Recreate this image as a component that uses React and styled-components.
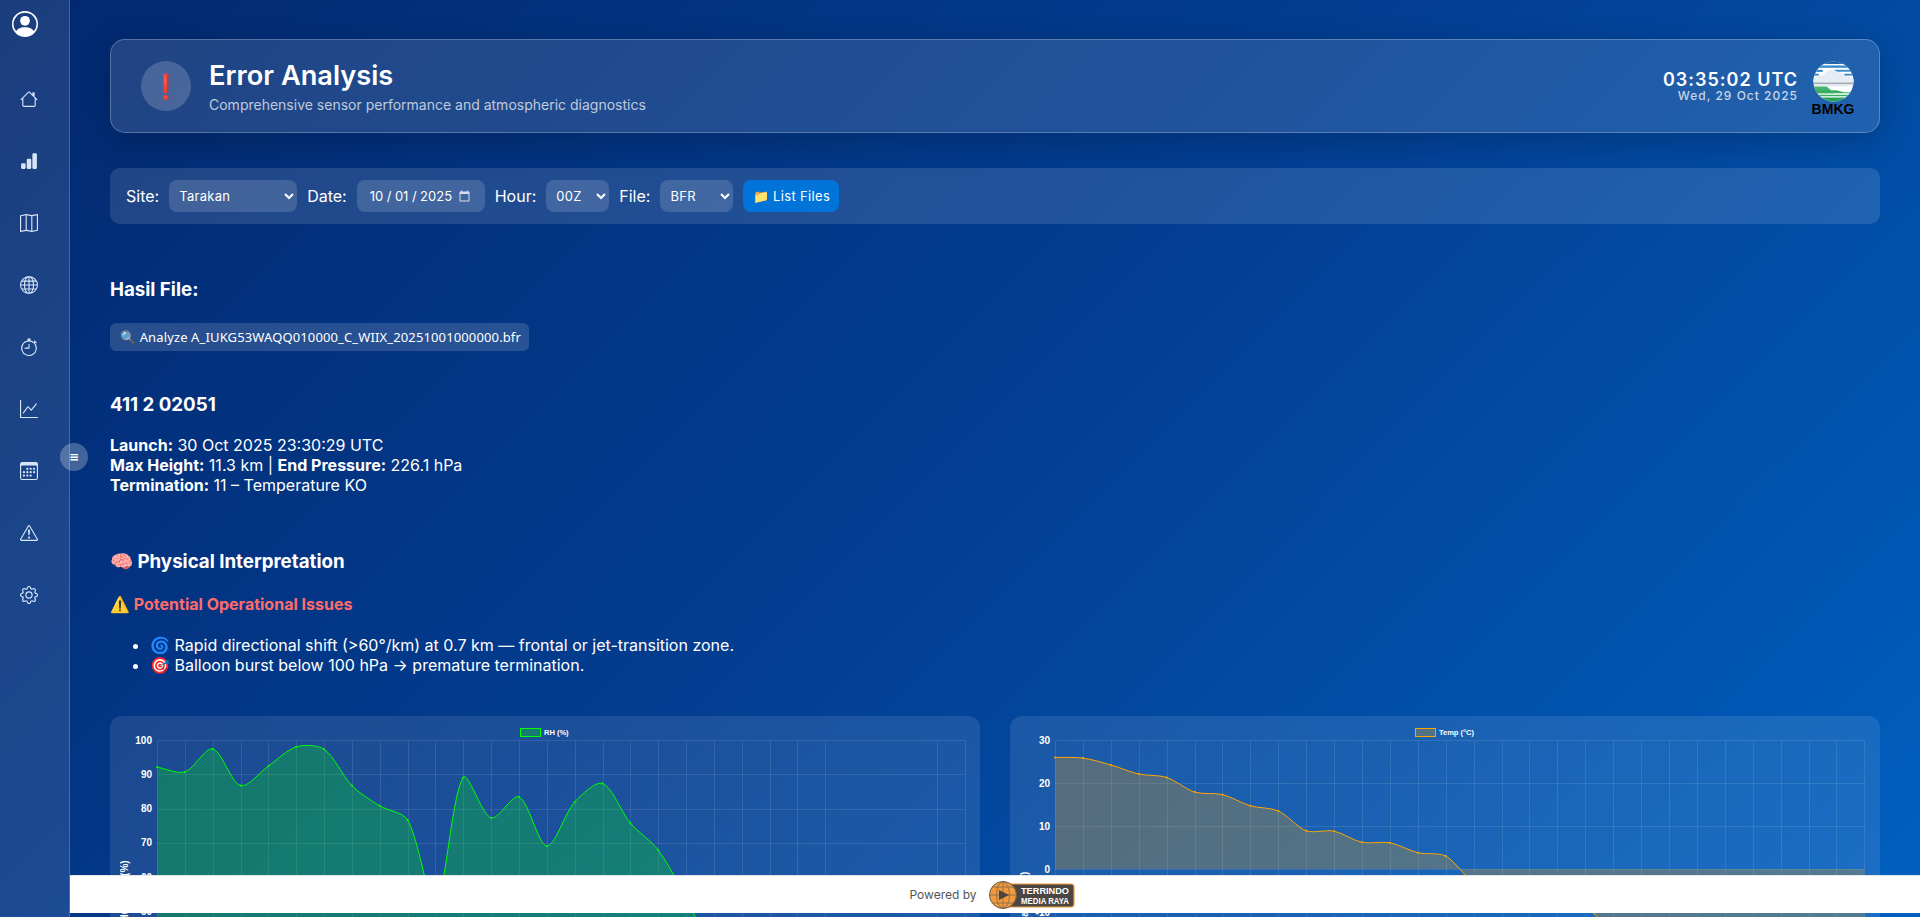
import React from "react";
import styled, { createGlobalStyle } from "styled-components";
import {
  BsPersonCircle, BsHouse, BsBarChartFill, BsMap, BsGlobe, BsStopwatch,
  BsGraphUp, BsCalendar3, BsExclamationTriangle, BsGear,
} from "react-icons/bs";

const Global = createGlobalStyle`
  html, body { margin: 0; height: 100%; overflow: hidden; }
  body { font-family: Inter, "Noto Sans", sans-serif; color: #fff; }
  * { box-sizing: border-box; }
`;

const Shell = styled.div`
  height: 100vh;
  display: flex;
  background: linear-gradient(135deg, #02286f 0%, #033e92 50%, #0060c0 100%);
  overflow: hidden;
`;

const Sidebar = styled.aside`
  position: relative;
  flex: 0 0 70px;
  display: flex;
  flex-direction: column;
  background: rgba(255, 255, 255, 0.1);
  border-right: 1px solid rgba(255, 255, 255, 0.2);
  padding: 11px 0 0 0;
`;

const Avatar = styled.div`
  width: 50px;
  height: 26px;
  display: flex;
  justify-content: center;
  font-size: 26px;
  color: #fff;
`;

const Nav = styled.nav`
  margin-top: 53px;
  display: flex;
  flex-direction: column;
  gap: 44px;
  padding-left: 20px;
`;

const NavIcon = styled.a`
  width: 18px;
  height: 18px;
  display: block;
  font-size: 18px;
  line-height: 18px;
  color: rgba(225, 238, 255, 0.95);
`;

const Toggle = styled.button`
  position: absolute;
  top: 443px;
  left: 60px;
  width: 28px;
  height: 28px;
  padding: 0;
  border: 0;
  border-radius: 50%;
  background: rgba(255, 255, 255, 0.25);
  color: #fff;
  font: 700 12px/28px "DejaVu Sans", sans-serif;
  text-align: center;
`;

const Main = styled.main`
  flex: 1;
  min-width: 0;
  padding: 39px 40px 0;
`;

const Header = styled.header`
  height: 94px;
  display: flex;
  align-items: center;
  justify-content: space-between;
  padding: 0 25px 0 30px;
  background: rgba(255, 255, 255, 0.12);
  border: 1px solid rgba(255, 255, 255, 0.25);
  border-radius: 15px;
  box-shadow: 0 8px 32px rgba(0, 0, 0, 0.2);
`;

const HeaderLeft = styled.div`
  display: flex;
  align-items: center;
  gap: 18px;
`;

const IconCircle = styled.div`
  width: 50px;
  height: 50px;
  border-radius: 50%;
  background: rgba(255, 255, 255, 0.18);
  display: flex;
  align-items: center;
  justify-content: center;
  font-size: 24px;
`;

const Title = styled.h1`
  margin: 0;
  font-size: 27.2px;
  line-height: 34px;
  font-weight: 600;
`;

const Subtitle = styled.p`
  margin: 3px 0 0;
  font-size: 14px;
  line-height: 17px;
  color: rgba(255, 255, 255, 0.72);
`;

const HeaderRight = styled.div`
  display: flex;
  align-items: center;
  gap: 14px;
`;

const Clock = styled.div`
  text-align: right;
  margin-top: 1px;
`;

const ClockTime = styled.div`
  font-size: 18px;
  line-height: 19px;
  font-weight: 600;
  letter-spacing: 1px;
`;

const ClockDate = styled.div`
  font-size: 12px;
  line-height: 14px;
  font-weight: 500;
  letter-spacing: 1px;
  color: rgba(255, 255, 255, 0.75);
`;

const LogoBox = styled.div`
  width: 42px;
  margin-top: 4px;
  display: flex;
  flex-direction: column;
  align-items: center;
`;

const LogoText = styled.span`
  font: 700 14px/14px "Liberation Sans", sans-serif;
  color: #000;
`;

const FilterBar = styled.section`
  margin-top: 35px;
  height: 56px;
  display: flex;
  align-items: center;
  gap: 10px;
  padding: 0 16px;
  background: rgba(255, 255, 255, 0.12);
  border-radius: 10px;
`;

const FieldLabel = styled.label`
  font-size: 16px;
  color: #fff;
`;

const Select = styled.select`
  width: ${(p) => p.$w}px;
  height: 32px;
  padding: 0 6px;
  border: 0;
  border-radius: 8px;
  background: rgba(255, 255, 255, 0.15);
  color: #fff;
  font: 400 13px Inter, sans-serif;
  letter-spacing: 0.3px;
  outline: none;
`;

const DateInput = styled.input`
  width: 128px;
  height: 32px;
  padding: 0 14px 0 12px;
  border: 0;
  border-radius: 8px;
  background: rgba(255, 255, 255, 0.15);
  color: #fff;
  font: 400 13px Inter, sans-serif;
  outline: none;
  &::-webkit-datetime-edit-text {
    padding: 0 2.5px;
  }
  &::-webkit-calendar-picker-indicator {
    filter: invert(1);
    opacity: 0.8;
    margin-left: 0;
    padding: 0;
  }
`;

const ListButton = styled.button`
  height: 32px;
  width: 96px;
  border: 0;
  border-radius: 8px;
  background: #0074d9;
  color: #fff;
  font: 400 13px Inter, sans-serif;
  letter-spacing: 0.35px;
  padding: 0;
`;

const SectionTitle = styled.h3`
  margin: ${(p) => p.$mt}px 0 0;
  font-size: 18.72px;
  line-height: 22px;
  font-weight: 700;
`;

const AnalyzeButton = styled.button`
  display: block;
  margin-top: 22px;
  height: 28px;
  width: 419px;
  padding: 0 10px;
  border: 0;
  border-radius: 6px;
  background: rgba(255, 255, 255, 0.15);
  color: #fff;
  font: 400 13px "Noto Sans", sans-serif;
  letter-spacing: 0.13px;
  text-align: left;
  white-space: nowrap;
`;

const Meta = styled.div`
  margin-top: 19px;
  font-size: 16px;
  line-height: 20px;
  strong { font-weight: 700; }
`;

const IssueTitle = styled.h4`
  margin: 21px 0 0;
  font-size: 16px;
  line-height: 20px;
  font-weight: 700;
  color: #ff6b6b;
`;

const IssueList = styled.ul`
  margin: 21px 0 0;
  padding-left: 40px;
  font-size: 16px;
  line-height: 20px;
`;

const Charts = styled.div`
  margin-top: 41px;
  display: grid;
  grid-template-columns: 1fr 1fr;
  gap: 30px;
`;

const ChartPanel = styled.div`
  background: rgba(255, 255, 255, 0.1);
  border-radius: 12px;
  padding: 0 10px 10px;
`;

const ChartSvg = styled.svg`
  display: block;
  width: 850px;
  height: 420px;
`;

const Footer = styled.footer`
  position: fixed;
  left: 70px;
  right: 0;
  bottom: 4px;
  height: 38px;
  background: #fff;
  border-top: 1px solid #e6e6e6;
  display: flex;
  align-items: center;
  justify-content: center;
  gap: 12px;
  padding-right: 6px;
`;

const FooterText = styled.span`
  font-size: 12px;
  color: #555;
`;

const spline = (pts, t = 0.3) => {
  const c = pts.map((p, i) => {
    const a = pts[i - 1] || p;
    const b = pts[i + 1] || p;
    const d1 = Math.hypot(p[0] - a[0], p[1] - a[1]);
    const d2 = Math.hypot(b[0] - p[0], b[1] - p[1]);
    const s = d1 + d2 || 1;
    const f1 = (t * d1) / s;
    const f2 = (t * d2) / s;
    return {
      p: [p[0] - f1 * (b[0] - a[0]), p[1] - f1 * (b[1] - a[1])],
      n: [p[0] + f2 * (b[0] - a[0]), p[1] + f2 * (b[1] - a[1])],
    };
  });
  let d = `M${pts[0][0]} ${pts[0][1]}`;
  for (let i = 1; i < pts.length; i++) {
    d += ` C${c[i - 1].n[0]} ${c[i - 1].n[1]} ${c[i].p[0]} ${c[i].p[1]} ${pts[i][0]} ${pts[i][1]}`;
  }
  return d;
};

function LineChart({ data, left, right, top, perUnit, max, ticks, baseline, stroke, fill, legend, legendX, axisTitle, skip }) {
  const step = (right - left) / 29;
  const yOf = (v) => top + (max - v) * perUnit;
  const xOf = (i) => left + i * step;
  const pts = data.map((v, i) => [xOf(i), yOf(v)]);
  const bottom = 420;
  const line = spline(pts);
  const area = `${line} L${pts[pts.length - 1][0]} ${yOf(baseline)} L${pts[0][0]} ${yOf(baseline)} Z`;
  const titleY = top + (yOf(ticks[ticks.length - 1]) - top) / 2;
  return (
    <ChartSvg viewBox="0 0 850 420">
      {Array.from({ length: 30 }, (_, i) => i)
        .filter((i) => !skip.includes(i))
        .map((i) => (
          <line key={i} x1={Math.round(xOf(i)) + 0.5} x2={Math.round(xOf(i)) + 0.5} y1={top + 1} y2={bottom} stroke="rgba(255,255,255,0.1)" />
        ))}
      {ticks.map((v) => (
        <g key={v}>
          <line x1={left} x2={right} y1={Math.round(yOf(v)) + 0.5} y2={Math.round(yOf(v)) + 0.5} stroke="rgba(255,255,255,0.1)" />
          {yOf(v) < 210 && (
            <text x={left - 5} y={yOf(v) + 3.5} textAnchor="end" fill="#fff" fontFamily="Liberation Sans, sans-serif" fontWeight="700" fontSize="10">
              {v}
            </text>
          )}
        </g>
      ))}
      <path d={area} fill={fill} />
      <path d={line} fill="none" stroke={stroke} strokeWidth="1" />
      {pts.map((p, i) => (
        <circle key={i} cx={p[0]} cy={p[1]} r="1" fill={stroke} />
      ))}
      <rect x={legendX + 0.5} y={12.5} width={20} height={8} fill={fill} stroke={stroke} />
      <text x={legendX + 24} y={19} fill="#fff" fontFamily="Liberation Sans, sans-serif" fontWeight="700" fontSize="7.5">
        {legend}
      </text>
      <text
        transform={`translate(8 ${titleY}) rotate(-90)`}
        textAnchor="middle"
        fill="#fff"
        fontFamily="Liberation Sans, sans-serif"
        fontWeight="700"
        fontSize="10"
      >
        {axisTitle}
      </text>
    </ChartSvg>
  );
}

function BmkgMark() {
  return (
    <svg width="41" height="41" viewBox="0 0 42 42">
      <defs>
        <clipPath id="bmkg-c"><circle cx="21" cy="21" r="20.5" /></clipPath>
      </defs>
      <g clipPath="url(#bmkg-c)">
        <rect width="42" height="42" fill="#fff" />
        <rect width="42" height="3" fill="#1360a8" />
        <rect y="4.5" width="42" height="2.5" fill="#3d8ccb" />
        <rect x="22" y="9" width="20" height="2" fill="#3d8ccb" />
        <rect y="9" width="10" height="2.2" fill="#3d8ccb" />
        <rect y="13" width="6" height="2" fill="#3d8ccb" />
        <rect x="32" y="13" width="10" height="2" fill="#3d8ccb" />
        <path d="M0 19 C3 14 9 15 11 14 C13 9 22 7 26 12 C30 11 32 15 34 16 C38 15 41 18 42 19 V21 H0Z" fill="#e6ecf4" />
        <rect y="19" width="42" height="3" fill="#e6ecf4" />
        <rect y="22" width="42" height="2" fill="#a4acb6" />
        <rect y="24" width="42" height="2" fill="#e6ecf4" />
        <path d="M0 22 H14 L22 29 H0Z" transform="translate(0 4)" fill="#47b36b" />
        <path d="M0 30 H24 L32 32 H42 V33 H0Z" fill="#39ac62" />
        <path d="M0 34.5 H42 V36 H0Z" fill="#39ac62" />
        <path d="M0 37.5 H42 V42 H0Z" fill="#2aa35a" />
      </g>
    </svg>
  );
}

function TerrindoLogo() {
  return (
    <svg width="86" height="28" viewBox="0 0 86 28">
      <rect x="10" y="3" width="75" height="23" rx="3" fill="#4c4643" stroke="#ef9a3d" strokeWidth="1.2" />
      <circle cx="14" cy="14" r="13.5" fill="#ef9a3d" stroke="#6b5a4a" strokeWidth="1" />
      <path d="M1 14H27M14 1V27M4 6H24M4 22H24" stroke="#7c6350" strokeWidth="0.7" fill="none" />
      <ellipse cx="14" cy="14" rx="6.5" ry="13" fill="none" stroke="#7c6350" strokeWidth="0.7" />
      <path d="M10 9 L20 14 L10 19Z" fill="#4c4643" />
      <text x="32" y="13" fill="#fff" fontFamily="Liberation Sans, sans-serif" fontWeight="700" fontSize="9" textLength="48" lengthAdjust="spacingAndGlyphs">TERRINDO</text>
      <text x="32" y="23" fill="#fff" fontFamily="Liberation Sans, sans-serif" fontWeight="700" fontSize="9" textLength="48" lengthAdjust="spacingAndGlyphs">MEDIA RAYA</text>
    </svg>
  );
}

const NAV = [BsHouse, BsBarChartFill, BsMap, BsGlobe, BsStopwatch, BsGraphUp, BsCalendar3, BsExclamationTriangle, BsGear];

const RH = [92.1, 90.7, 97.4, 86.7, 92.4, 98, 97.3, 86.7, 80.8, 76.7, 52, 89.1, 77.3, 83.4, 69.1, 81.9, 87.3, 75.8, 67.9, 54, 38, 30];
const TEMP = [25.95, 25.8, 24.2, 22.1, 21.3, 17.9, 17.3, 14.7, 13.5, 8.9, 8.8, 6.2, 6.1, 3.8, 3.0, -3, -4, -5, -6, -8.9, -14.5, -20, -25, -30, -35, -40, -45, -48, -50, -52];

export default function App() {
  return (
    <Shell>
      <Global />
      <Sidebar>
        <Avatar><BsPersonCircle /></Avatar>
        <Nav>
          {NAV.map((Icon, i) => (
            <NavIcon key={i}><Icon /></NavIcon>
          ))}
        </Nav>
        <Toggle>≡</Toggle>
      </Sidebar>
      <Main>
        <Header>
          <HeaderLeft>
            <IconCircle>❗</IconCircle>
            <div>
              <Title>Error Analysis</Title>
              <Subtitle>Comprehensive sensor performance and atmospheric diagnostics</Subtitle>
            </div>
          </HeaderLeft>
          <HeaderRight>
            <Clock>
              <ClockTime>03:35:02 UTC</ClockTime>
              <ClockDate>Wed, 29 Oct 2025</ClockDate>
            </Clock>
            <LogoBox>
              <BmkgMark />
              <LogoText>BMKG</LogoText>
            </LogoBox>
          </HeaderRight>
        </Header>

        <FilterBar>
          <FieldLabel>Site:</FieldLabel>
          <Select $w={128} defaultValue="Tarakan"><option>Tarakan</option></Select>
          <FieldLabel>Date:</FieldLabel>
          <DateInput type="date" defaultValue="2025-10-01" />
          <FieldLabel>Hour:</FieldLabel>
          <Select $w={63} defaultValue="00Z"><option>00Z</option></Select>
          <FieldLabel>File:</FieldLabel>
          <Select $w={73} defaultValue="BFR"><option>BFR</option></Select>
          <ListButton>📁 List Files</ListButton>
        </FilterBar>

        <SectionTitle $mt={55}>Hasil File:</SectionTitle>
        <AnalyzeButton>🔍 Analyze A_IUKG53WAQQ010000_C_WIIX_20251001000000.bfr</AnalyzeButton>

        <SectionTitle $mt={43}>411 2 02051</SectionTitle>
        <Meta>
          <strong>Launch:</strong> 30 Oct 2025 23:30:29 UTC<br />
          <strong>Max Height:</strong> 11.3 km | <strong>End Pressure:</strong> 226.1 hPa<br />
          <strong>Termination:</strong> 11 – Temperature KO
        </Meta>

        <SectionTitle $mt={56}>🧠 Physical Interpretation</SectionTitle>
        <IssueTitle>⚠️ Potential Operational Issues</IssueTitle>
        <IssueList>
          <li>🌀 Rapid directional shift (&gt;60°/km) at 0.7 km — frontal or jet-transition zone.</li>
          <li>🎯 Balloon burst below 100 hPa → premature termination.</li>
        </IssueList>

        <Charts>
          <ChartPanel>
            <LineChart
              data={RH} left={37} right={844.5} top={24} perUnit={3.43} max={100}
              ticks={[100, 90, 80, 70, 60, 50, 40, 30, 20, 10, 0]} baseline={0}
              stroke="#00ff00" fill="rgba(0,255,0,0.25)" legend="RH (%)" legendX={400}
              axisTitle="Relative Humidity (%)" skip={[25, 26, 27]}
            />
          </ChartPanel>
          <ChartPanel>
            <LineChart
              data={TEMP} left={35} right={844.4} top={24} perUnit={4.3} max={30}
              ticks={[30, 20, 10, 0, -10, -20, -30, -40, -50]} baseline={0}
              stroke="#ffa500" fill="rgba(255,165,0,0.25)" legend="Temp (°C)" legendX={395}
              axisTitle="Temperature (°C)" skip={[]}
            />
          </ChartPanel>
        </Charts>
      </Main>
      <Footer>
        <FooterText>Powered by</FooterText>
        <TerrindoLogo />
      </Footer>
    </Shell>
  );
}
